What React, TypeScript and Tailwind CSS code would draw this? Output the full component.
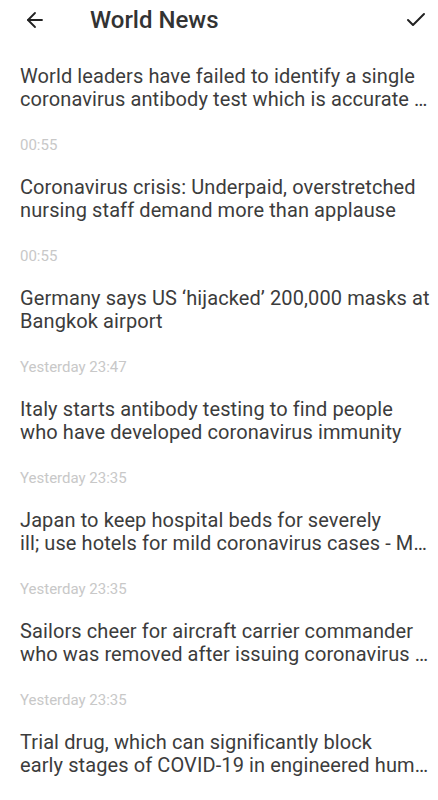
import { ArrowLeft, Check } from "lucide-react";

type NewsItem = { lines: [string, string]; time: string };

const NEWS: NewsItem[] = [
  { lines: ["World leaders have failed to identify a single", "coronavirus antibody test which is accurate …"], time: "00:55" },
  { lines: ["Coronavirus crisis: Underpaid, overstretched", "nursing staff demand more than applause"], time: "00:55" },
  { lines: ["Germany says US ‘hijacked’ 200,000 masks at", "Bangkok airport"], time: "Yesterday 23:47" },
  { lines: ["Italy starts antibody testing to find people", "who have developed coronavirus immunity"], time: "Yesterday 23:35" },
  { lines: ["Japan to keep hospital beds for severely", "ill; use hotels for mild coronavirus cases - M…"], time: "Yesterday 23:35" },
  { lines: ["Sailors cheer for aircraft carrier commander", "who was removed after issuing coronavirus …"], time: "Yesterday 23:35" },
  { lines: ["Trial drug, which can significantly block", "early stages of COVID-19 in engineered hum…"], time: "Yesterday 23:35" },
];

const App = () => {
  return (
    <div className="min-h-screen bg-white font-['Roboto',sans-serif]">
      {/* header */}
      <header className="h-10 flex items-center">
        <button type="button" className="w-[70px] h-10 flex items-center justify-center text-[#222]">
          <ArrowLeft size={24} strokeWidth={1.8} />
        </button>
        <h1 className="flex-1 pl-5 text-[24px] leading-8 font-medium text-[#333]">World News</h1>
        <button type="button" className="w-11 h-10 flex items-center justify-center text-[#222]">
          <Check size={24} strokeWidth={2} />
        </button>
      </header>

      <main className="pt-[13px]">
        {NEWS.map((n, i) => (
          <div key={i} className="pl-5 pr-2 pt-[12px] pb-[11px]">
            <p className="text-[20px] leading-[23px] tracking-[0.1px] text-[#3c3c3c]">
              <span className="block whitespace-nowrap">{n.lines[0]}</span>
              <span className="block whitespace-nowrap">{n.lines[1]}</span>
            </p>
            <p className="mt-[26px] text-[15px] leading-4 text-[#c8c8c8]">{n.time}</p>
          </div>
        ))}
      </main>
    </div>
  );
};

export default App;
